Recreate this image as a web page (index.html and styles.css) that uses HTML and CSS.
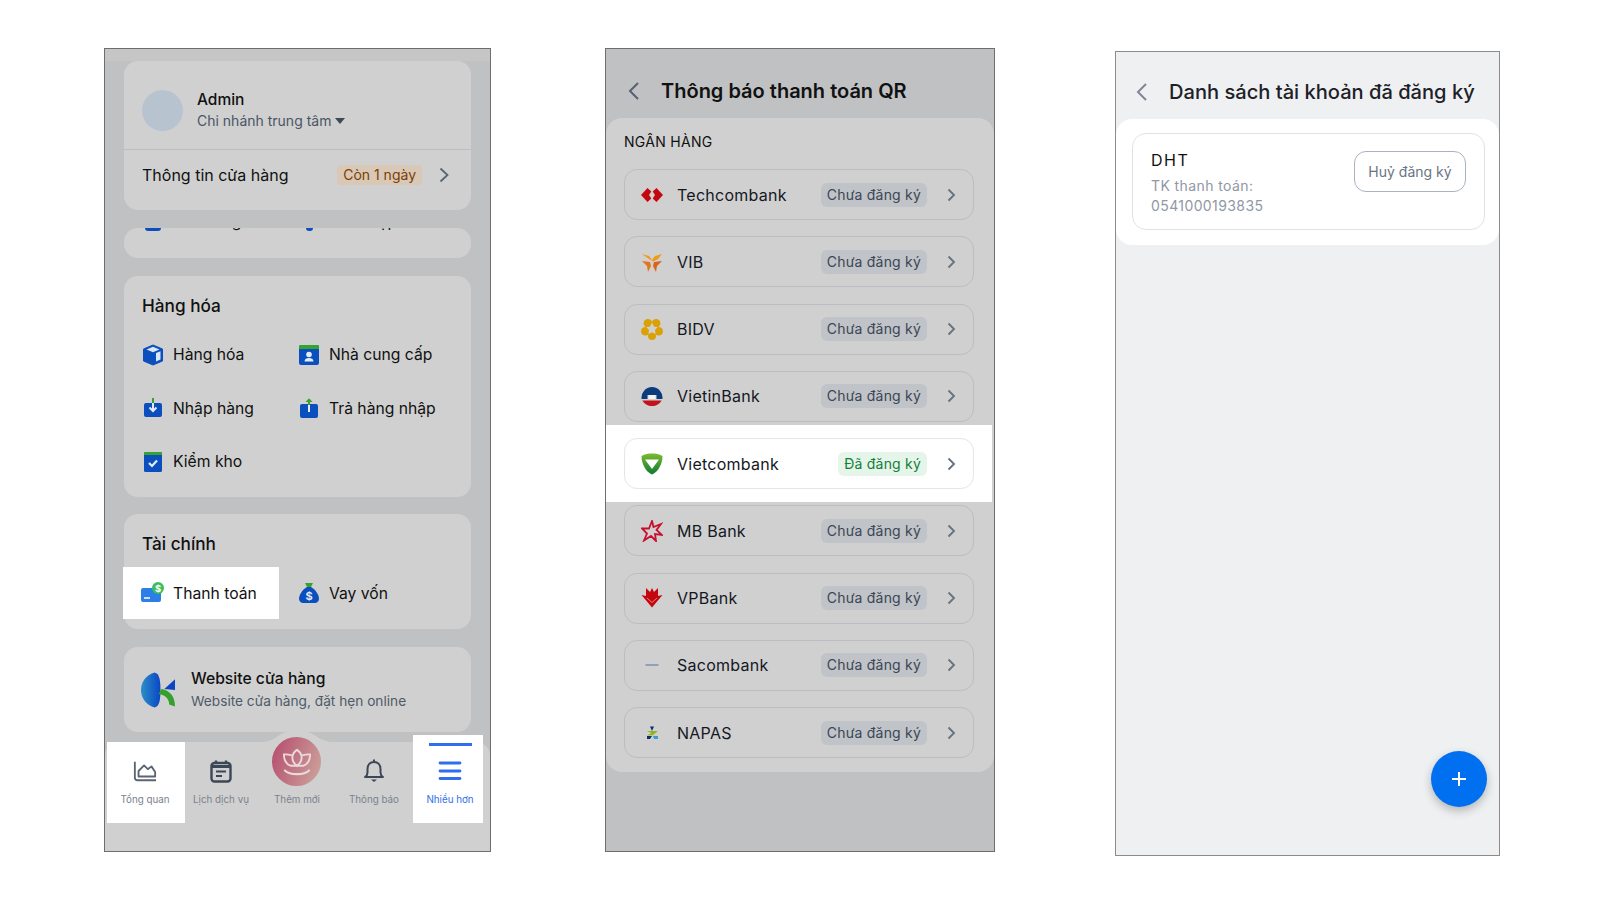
FILE: index.html
```html
<!DOCTYPE html>
<html lang="vi">
<head>
    <meta charset="UTF-8">
    <title>Thông báo thanh toán QR</title>
    <link rel="stylesheet" href="styles.css">
</head>
<body>
    <div class="page">

        <!-- man hinh 1: nhieu hon -->
        <div class="phone phone-menu">
            <div class="strip"></div>
            <div class="card card-store">
                <div class="store-user">
                    <div class="avatar"></div>
                    <div>
                        <div class="user-name">Admin</div>
                        <div class="user-branch">Chi nhánh trung tâm <span class="caret"></span></div>
                    </div>
                </div>
                <div class="store-info">
                    <span class="store-label">Thông tin cửa hàng</span>
                    <span class="days-pill">Còn 1 ngày</span>
                    <svg class="chev-big" viewBox="0 0 10 16"><path d="M1.5 1.5L8.5 8L1.5 14.5"/></svg>
                </div>
            </div>

            <div class="card card-clipped">
                <div class="menu-grid clipped-row">
                    <div class="menu-item"><span class="blue-square"></span>Đơn hàng</div>
                    <div class="menu-item"><span class="blue-dot"></span>Thu nhập</div>
                </div>
            </div>

            <div class="card card-goods">
                <div class="card-title">Hàng hóa</div>
                <div class="menu-grid">
                    <div class="menu-item">
                        <svg class="menu-icon" viewBox="0 0 22 22"><path d="M11 1L20.500 5V17L11 21L1.500 17V5Z" fill="#0b4fbf" stroke="#0b4fbf" stroke-linejoin="round"/><path d="M11 2.800L17.500 5.500L11 8.200L4.500 5.500Z" fill="#d8e6f7"/><path d="M14 9L18.500 7.200V15.500L14 17.400Z" fill="#d8e6f7"/></svg>
                        Hàng hóa
                    </div>
                    <div class="menu-item">
                        <svg class="menu-icon" viewBox="0 0 22 22"><rect x="1" y="1" width="20" height="20" rx="2" fill="#0b4fbf"/><path d="M1 5V3a2 2 0 0 1 2-2h16a2 2 0 0 1 2 2v2Z" fill="#37a22e"/><circle cx="11" cy="10.500" r="2.800" fill="#e3ecf7"/><path d="M6.500 17.500c0-2.500 2-3.500 4.500-3.500s4.500 1 4.500 3.500Z" fill="#e3ecf7"/></svg>
                        Nhà cung cấp
                    </div>
                    <div class="menu-item">
                        <svg class="menu-icon" viewBox="0 0 22 22"><path d="M4 6h14a2 2 0 0 1 2 2v10a2 2 0 0 1-2 2H4a2 2 0 0 1-2-2V8a2 2 0 0 1 2-2Z" fill="#0b4fbf"/><path d="M11 1V6" stroke="#37a22e" stroke-width="2"/><path d="M11 6v7" stroke="#e3ecf7" stroke-width="2"/><path d="M7.500 10.500L11 14L14.500 10.500" fill="none" stroke="#e3ecf7" stroke-width="2"/></svg>
                        Nhập hàng
                    </div>
                    <div class="menu-item">
                        <svg class="menu-icon" viewBox="0 0 22 22"><path d="M4 7h14a2 2 0 0 1 2 2v10a2 2 0 0 1-2 2H4a2 2 0 0 1-2-2V9a2 2 0 0 1 2-2Z" fill="#0b4fbf"/><path d="M11 3v5" stroke="#37a22e" stroke-width="2"/><path d="M7.500 5L11 1.200L14.500 5Z" fill="#37a22e"/><path d="M11 8v7" stroke="#e3ecf7" stroke-width="2"/></svg>
                        Trả hàng nhập
                    </div>
                    <div class="menu-item">
                        <svg class="menu-icon" viewBox="0 0 22 22"><rect x="2" y="1" width="18" height="20" rx="1.500" fill="#0b4fbf"/><path d="M2 4V2.500A1.500 1.500 0 0 1 3.500 1h15A1.500 1.500 0 0 1 20 2.500V4Z" fill="#37a22e"/><path d="M7 12L10 15L15 9.500" fill="none" stroke="#e3ecf7" stroke-width="2.200"/></svg>
                        Kiểm kho
                    </div>
                </div>
            </div>

            <div class="card card-finance">
                <div class="card-title">Tài chính</div>
                <div class="finance-grid">
                    <div class="menu-item finance-on">
                        <svg class="menu-icon pay-icon" viewBox="0 0 24 22"><rect x="0" y="6" width="20" height="14" rx="2" fill="#2d7fe6"/><path d="M3 16h6" stroke="#fff" stroke-width="1.500"/><circle cx="17" cy="6" r="6" fill="#3bbf5a"/><text class="money money-small" x="17" y="9.500" text-anchor="middle">$</text></svg>
                        Thanh toán
                    </div>
                    <div class="menu-item">
                        <svg class="menu-icon" viewBox="0 0 22 22"><path d="M7 1h8l-2 4H9Z" fill="#37a22e"/><path d="M9 5h4c5 3 8 8 8 12 0 2-2 4-4 4H5c-2 0-4-2-4-4 0-4 3-9 8-12Z" fill="#0b4fbf"/><text class="money" x="11" y="18" text-anchor="middle">$</text></svg>
                        Vay vốn
                    </div>
                </div>
            </div>

            <div class="card card-web">
                <svg class="web-logo" viewBox="0 0 36 36">
                    <defs><linearGradient id="webBlue" x1="0" y1="0" x2="1" y2="0"><stop offset="0" stop-color="#2b8fc9"/><stop offset="1" stop-color="#0b46c4"/></linearGradient></defs>
                    <path d="M14 0C4 3 0 11 0 18s4 15 14 18c5-1 6-8 6-18s-1-17-6-18Z" fill="url(#webBlue)"/>
                    <path d="M24 17L35 7v11Z" fill="#0b46c4"/>
                    <path d="M21 17c7 1 14 6 14 18l-6-2c0-6-4-10-11-11Z" fill="#35a02c"/>
                </svg>
                <div>
                    <div class="web-name">Website cửa hàng</div>
                    <div class="web-sub">Website cửa hàng, đặt hẹn online</div>
                </div>
            </div>

            <div class="tabbar">
                <svg class="tab-bump" viewBox="0 0 78 11"><path d="M0 11C10 11 14 9 20 5C26 1 30 0 39 0S52 1 58 5C64 9 68 11 78 11Z"/></svg>
                <div class="tab tab-first">
                    <svg class="tab-icon" viewBox="0 0 26 24"><path d="M2 2V19a3 3 0 0 0 3 3H25M6 18V12L12 6L16 10L20 7L24 13V18Z" fill="none" stroke="#5a6473" stroke-width="2" stroke-linejoin="round"/></svg>
                    <span class="tab-label">Tổng quan</span>
                </div>
                <div class="tab tab-second">
                    <svg class="tab-icon" viewBox="0 0 24 24"><rect x="2.500" y="4" width="19" height="18.500" rx="3" fill="none" stroke="#3b4656" stroke-width="2.400"/><path d="M7 1.500V5M17 1.500V5" stroke="#3b4656" stroke-width="2.400"/><path d="M2 6h20v3H2Z" fill="#3b4656"/><path d="M7 12.500H17M7 17H13" stroke="#3b4656" stroke-width="2"/></svg>
                    <span class="tab-label">Lịch dịch vụ</span>
                </div>
                <div class="tab tab-center">
                    <span class="tab-label">Thêm mới</span>
                </div>
                <div class="tab tab-fourth">
                    <svg class="tab-icon" viewBox="0 0 24 24"><path d="M12 3c-4 0-6.500 3-6.500 7v3.500c0 2-1 3.500-2.500 4.500h18c-1.500-1-2.500-2.500-2.500-4.500V10c0-4-2.500-7-6.500-7Z" fill="none" stroke="#3b4656" stroke-width="2" stroke-linejoin="round"/><path d="M12 .5V3" stroke="#3b4656" stroke-width="2"/><path d="M9 20.500h6L12 23Z" fill="#3b4656"/></svg>
                    <span class="tab-label">Thông báo</span>
                </div>
                <div class="tab tab-more">
                    <div class="tab-mark"></div>
                    <svg class="tab-icon" viewBox="0 0 24 24"><path d="M2 4H22M2 12H22M2 19.500H22" stroke="#2f6fed" stroke-width="2.800" stroke-linecap="round"/></svg>
                    <span class="tab-label label-on">Nhiều hơn</span>
                </div>
                <div class="add-button">
                    <svg class="lotus" viewBox="0 0 32 30"><path d="M16 2c3 2 5 5 5 8.500S19 17 16 19c-3-2-5-5-5-8.500S13 4 16 2Z" fill="none" stroke="#ecd9d9" stroke-width="2"/><path d="M10.500 8C7 7 4.500 6.500 2 7c0 5 2 10 7 12h14c5-2 7-7 7-12-2.500-.5-5 0-8.500 1" fill="none" stroke="#ecd9d9" stroke-width="2"/><path d="M3 24c3 3 7 4 13 4s10-1 13-4" fill="none" stroke="#ecd9d9" stroke-width="2.200" stroke-linecap="round"/></svg>
                </div>
            </div>
        </div>

        <!-- man hinh 2: danh sach ngan hang -->
        <div class="phone phone-banks">
            <div class="top-bar">
                <svg class="back" viewBox="0 0 12 20"><path d="M10 2L2 10L10 18"/></svg>
                <h1 class="bar-title">Thông báo thanh toán QR</h1>
            </div>
            <div class="sheet">
                <div class="sheet-label">NGÂN HÀNG</div>
                <div class="bank-list">
                    <div class="bank-row">
                        <svg class="bank-logo" viewBox="0 0 22 22"><path d="M6.500 4L0 11L6.500 18L10.300 14.500L8 11L10.300 7.500Z" fill="#c4070f"/><path d="M15.500 4L22 11L15.500 18L11.700 14.500L14 11L11.700 7.500Z" fill="#c4070f"/></svg>
                        <span class="bank-name">Techcombank</span>
                        <span class="pill">Chưa đăng ký</span>
                        <svg class="chev"><use href="#chev"/></svg>
                    </div>
                    <div class="bank-row">
                        <svg class="bank-logo" viewBox="0 0 22 22"><path d="M1 3L8 5L11 9L14 5L21 3L17 8L12.500 10.500L8 8Z" fill="#f09a1a"/><path d="M1 10L9 11L10 15L7 21L6 15Z" fill="#e4761b"/><path d="M21 10L13 11L12 15L15 21L16 15Z" fill="#d9641a"/></svg>
                        <span class="bank-name">VIB</span>
                        <span class="pill">Chưa đăng ký</span>
                        <svg class="chev"><use href="#chev"/></svg>
                    </div>
                    <div class="bank-row">
                        <svg class="bank-logo bidv-logo" viewBox="0 0 22 22"><circle cx="15.100" cy="5.300" r="4.300"/><circle cx="17.700" cy="13.200" r="4.300"/><circle cx="11" cy="18" r="4"/><circle cx="4.300" cy="13.200" r="4.300"/><circle cx="6.900" cy="5.300" r="4.300"/><path class="bidv-star" d="M11 4.500L12.900 8.400L16.700 9.300L14 12L14.500 16L11 14.200L7.500 16L8 12L5.300 9.300L9.100 8.400Z"/></svg>
                        <span class="bank-name">BIDV</span>
                        <span class="pill">Chưa đăng ký</span>
                        <svg class="chev"><use href="#chev"/></svg>
                    </div>
                    <div class="bank-row">
                        <svg class="bank-logo" viewBox="0 0 22 22"><path d="M.6 14A10.500 10.500 0 1 1 21.400 14H15.500V10H6.500V14Z" fill="#0b3a7d"/><path d="M7.500 10H14.500V14H7.500Z" fill="#f4f4f4"/><path d="M1.500 15.500H20.500C19 19 15 21 11 21S3 19 1.500 15.500Z" fill="#c3121d"/></svg>
                        <span class="bank-name">VietinBank</span>
                        <span class="pill">Chưa đăng ký</span>
                        <svg class="chev"><use href="#chev"/></svg>
                    </div>
                    <div class="bank-band">
                        <div class="bank-row bank-on">
                            <svg class="bank-logo" viewBox="0 0 22 22">
                                <defs><linearGradient id="vcbGreen" x1="0" y1="0" x2="0" y2="1"><stop offset="0" stop-color="#7dbb2e"/><stop offset="1" stop-color="#0a7a35"/></linearGradient></defs>
                                <path d="M0.500 3C4 1 7 .5 11 .5S18 1 21.500 3C21.500 11 17 19 11 21.500C5 19 .5 11 .5 3Z" fill="url(#vcbGreen)"/>
                                <path d="M4 6.500H18L11 16Z" fill="#fff"/>
                            </svg>
                            <span class="bank-name">Vietcombank</span>
                            <span class="pill pill-on">Đã đăng ký</span>
                            <svg class="chev"><use href="#chev"/></svg>
                        </div>
                    </div>
                    <div class="bank-row">
                        <svg class="bank-logo" viewBox="0 0 22 22"><path d="M11 1L12.500 7L20 4L15.500 10L21 15L14 14L15 21L10 16L3 20.500L6 13.500L1 8.500L8 8.500Z" fill="none" stroke="#c8102e" stroke-width="1.800"/></svg>
                        <span class="bank-name">MB Bank</span>
                        <span class="pill">Chưa đăng ký</span>
                        <svg class="chev"><use href="#chev"/></svg>
                    </div>
                    <div class="bank-row">
                        <svg class="bank-logo" viewBox="0 0 22 22"><path d="M5 1L9 5L11 1L13 5L17 1V9L21.500 8L11 20.500L.5 8L5 9Z" fill="#c4070f"/><path d="M6 11L11 15.500L16 11" fill="none" stroke="#ee9a9a" stroke-width=".8"/></svg>
                        <span class="bank-name">VPBank</span>
                        <span class="pill">Chưa đăng ký</span>
                        <svg class="chev"><use href="#chev"/></svg>
                    </div>
                    <div class="bank-row">
                        <svg class="bank-logo" viewBox="0 0 22 22"><path d="M4.500 11H17.500" stroke="#2a5d94" stroke-width=".8"/></svg>
                        <span class="bank-name">Sacombank</span>
                        <span class="pill">Chưa đăng ký</span>
                        <svg class="chev"><use href="#chev"/></svg>
                    </div>
                    <div class="bank-row">
                        <svg class="bank-logo" viewBox="0 0 22 22"><path d="M9 4.500H13L11 9Z" fill="#0b2d6b"/><path d="M6 9L17 9L12 13L16 13L6 13.500L10.500 11Z" fill="#8fb31a"/><path d="M6 14H11L9 17H6Z" fill="#0b2d6b"/><path d="M12 14H17V17H13Z" fill="#3d9ad6"/></svg>
                        <span class="bank-name">NAPAS</span>
                        <span class="pill">Chưa đăng ký</span>
                        <svg class="chev"><use href="#chev"/></svg>
                    </div>
                </div>
            </div>
        </div>

        <!-- man hinh 3: tai khoan da dang ky -->
        <div class="phone phone-accounts">
            <div class="top-bar top-bar-light">
                <svg class="back back-light" viewBox="0 0 12 20"><path d="M10 2L2 10L10 18"/></svg>
                <h1 class="bar-title bar-title-light">Danh sách tài khoản đã đăng ký</h1>
            </div>
            <div class="sheet sheet-white">
                <div class="account-card">
                    <div>
                        <div class="account-name">DHT</div>
                        <div class="account-sub">TK thanh toán:</div>
                        <div class="account-sub">0541000193835</div>
                    </div>
                    <div class="cancel-btn">Huỷ đăng ký</div>
                </div>
            </div>
            <div class="fab">
                <svg class="fab-plus" viewBox="0 0 14 14"><path d="M7 0V14M0 7H14"/></svg>
            </div>
        </div>
    </div>

    <svg class="sprite"><symbol id="chev" viewBox="0 0 9 14"><path d="M1.500 1.500L7 7L1.500 12.500" fill="none" stroke-width="1.900"/></symbol></svg>
</body>
</html>
```

FILE: styles.css
```css
* {
    box-sizing: border-box;
}

body {
    font-family: 'Inter', 'Liberation Sans', sans-serif;
    background-color: #fff;
    margin: 0;
    padding: 0;
    color: #111;
}

.page {
    display: flex;
    align-items: flex-start;
    padding: 48px 0 0 104px;
    height: 900px;
    overflow: hidden;
}

.sprite {
    display: none;
}

.phone {
    position: relative;
    height: 804px;
    border: 1px solid #6e6e6e;
    background-color: #c0c1c3;
    overflow: hidden;
}

.phone-menu {
    width: 387px;
    display: flex;
    flex-direction: column;
    padding: 0 19px;
}

.phone-banks {
    width: 390px;
    margin-left: 114px;
}

.phone-accounts {
    width: 385px;
    height: 805px;
    margin-left: 120px;
    margin-top: 3px;
    background-color: #eff0f2;
    border-color: #8c8c8c;
}

/* man hinh 1 */
.strip {
    height: 12px;
    margin: 0 -19px;
    background-color: #c6c6c6;
    flex: none;
}

.card {
    background-color: #d0d0d0;
    border-radius: 14px;
    flex: none;
}

.card-store {
    height: 149px;
}

.store-user {
    height: 89px;
    display: flex;
    align-items: center;
    gap: 14px;
    padding: 11px 0 0 18px;
    border-bottom: 1px solid #bcbec1;
}

.avatar {
    width: 41px;
    height: 41px;
    border-radius: 50%;
    background-color: #b8c3d0;
}

.user-name {
    font-size: 15.500px;
    font-weight: 500;
    line-height: 20px;
}

.user-branch {
    font-size: 14px;
    line-height: 22px;
    color: #4a5565;
}

.caret {
    display: inline-block;
    width: 0;
    height: 0;
    margin-bottom: 2px;
    border-left: 5px solid transparent;
    border-right: 5px solid transparent;
    border-top: 6px solid #3e4856;
}

.store-info {
    height: 51px;
    display: flex;
    align-items: center;
    padding: 0 22px 2px 18px;
}

.store-label {
    font-size: 16px;
    flex: 1;
}

.days-pill {
    font-size: 14px;
    line-height: 20px;
    padding: 0 6px;
    background-color: #d9c8b6;
    color: #7a3e05;
    border-radius: 4px;
}

.chev-big {
    width: 10px;
    height: 16px;
    margin-left: 17px;
}

.chev-big path {
    fill: none;
    stroke: #596473;
    stroke-width: 1.800;
}

.card-clipped {
    height: 30px;
    margin-top: 18px;
    overflow: hidden;
    padding-left: 18px;
}

.card-clipped .clipped-row {
    margin-top: -33.500px;
}

.blue-square {
    width: 16px;
    height: 20px;
    margin: 0 9px 0 3px;
    background-color: #0b4fbf;
    border-radius: 3px;
}

.blue-dot {
    width: 7px;
    height: 20px;
    margin: 0 14px 0 8px;
    background-color: #0b4fbf;
    border-radius: 3px;
}

.card-goods {
    height: 221px;
    margin-top: 18px;
    padding: 19px 0 0 18px;
}

.card-title {
    font-size: 17.200px;
    font-weight: 500;
    line-height: 22px;
}

.menu-grid {
    display: grid;
    grid-template-columns: 156px 1fr;
    grid-auto-rows: 53.500px;
    margin-top: 11px;
}

.menu-item {
    display: flex;
    align-items: center;
    font-size: 15.700px;
    white-space: nowrap;
}

.menu-icon {
    width: 22px;
    height: 22px;
    margin-right: 9px;
    flex: none;
}

.money {
    font-family: 'Inter', sans-serif;
    font-size: 11px;
    font-weight: 700;
    fill: #e3ecf7;
}

.money-small {
    font-size: 9.500px;
    fill: #fff;
}

.card-finance {
    height: 115px;
    margin-top: 17px;
    padding: 19px 0 0 18px;
}

.finance-grid {
    display: grid;
    grid-template-columns: 156px 1fr;
    height: 52px;
    margin: 12px 0 0 -19px;
}

.finance-grid .menu-item:last-child {
    padding-left: 19px;
}

.finance-on {
    background-color: #fff;
    padding-left: 18px;
}

.pay-icon {
    width: 24px;
    margin-right: 8px;
}

.card-web {
    height: 85px;
    margin-top: 18px;
    display: flex;
    align-items: center;
    gap: 15px;
    padding-left: 17px;
}

.web-logo {
    width: 35px;
    height: 36px;
    flex: none;
}

.web-name {
    font-size: 15.700px;
    font-weight: 500;
    line-height: 22px;
}

.web-sub {
    font-size: 13.700px;
    line-height: 22px;
    color: #4f5a69;
}

.tabbar {
    position: relative;
    display: flex;
    align-items: flex-start;
    flex: none;
    height: 109px;
    margin: 10px -19px 0;
    padding-left: 2px;
    background-color: #d0d0d0;
    border-radius: 14px 14px 0 0;
}

.tab-bump {
    position: absolute;
    left: 153px;
    top: -11px;
    width: 78px;
    height: 11px;
}

.tab-bump path {
    fill: #d0d0d0;
}

.tab {
    height: 81px;
    display: flex;
    flex-direction: column;
    align-items: center;
    padding-top: 17px;
}

.tab-icon {
    width: 24px;
    height: 24px;
}

.tab-label {
    font-size: 9.800px;
    line-height: 14px;
    margin-top: 10px;
    color: #7a828d;
    white-space: nowrap;
}

.tab-first {
    width: 78px;
    padding-right: 2px;
    background-color: #fff;
}

.tab-second {
    width: 74px;
    padding-right: 2px;
}

.tab-center {
    width: 76px;
    padding-top: 41px;
}

.tab-fourth {
    width: 76px;
    margin-right: 2px;
    padding-left: 2px;
}

.tab-more {
    position: relative;
    width: 70px;
    height: 88px;
    margin-top: -7px;
    padding: 24px 0 0 4px;
    background-color: #fff;
}

.tab-mark {
    position: absolute;
    top: 8px;
    left: 16px;
    width: 43px;
    height: 3px;
    background-color: #2f6fed;
}

.label-on {
    color: #2f6fed;
}

.add-button {
    position: absolute;
    left: 167px;
    top: -5px;
    width: 49px;
    height: 49px;
    border-radius: 50%;
    background: linear-gradient(110deg, #b54a6c, #cda79e);
    display: flex;
    align-items: center;
    justify-content: center;
}

.lotus {
    width: 30px;
    height: 28px;
}

/* man hinh 2 */
.top-bar {
    height: 69px;
    padding: 14px 0 0 22px;
    display: flex;
    align-items: center;
    gap: 21px;
}

.top-bar-light {
    padding: 10px 0 0 20px;
    gap: 21px;
}

.back {
    width: 12px;
    height: 20px;
    flex: none;
}

.back path {
    fill: none;
    stroke: #566170;
    stroke-width: 2;
}

.back-light path {
    stroke: #7e8793;
}

.bar-title {
    margin: 0;
    font-size: 20px;
    font-weight: 600;
}

.bar-title-light {
    font-size: 20.100px;
    font-weight: 500;
    color: #1d2127;
    white-space: nowrap;
}

.sheet {
    height: 654px;
    background-color: #d0d0d0;
    border-radius: 16px;
    padding: 13px 20px 0 18px;
}

.sheet-label {
    font-size: 14px;
    font-weight: 400;
    letter-spacing: .3px;
    line-height: 22px;
}

.bank-list {
    display: flex;
    flex-direction: column;
    gap: 16.250px;
    margin-top: 16px;
}

.bank-row {
    height: 51px;
    display: flex;
    align-items: center;
    padding: 0 17px 0 16px;
    border: 1px solid #bbbdc0;
    border-radius: 13px;
}

.bank-band {
    margin: -13px -18px;
    padding: 13px 18px;
    background-color: #fff;
}

.bank-row.bank-on {
    background-color: #fff;
    border-color: #e4e6e9;
}

.bidv-logo circle {
    fill: #dba004;
}

.bidv-star {
    fill: #d0d0d0;
}

.bank-logo {
    width: 22px;
    height: 22px;
    margin-right: 14px;
    flex: none;
}

.bank-name {
    flex: 1;
    font-size: 16px;
    font-weight: 400;
    letter-spacing: .25px;
    color: #14181f;
}

.pill {
    height: 24px;
    padding: 0 6px;
    font-size: 14px;
    line-height: 24px;
    letter-spacing: .2px;
    color: #3c4654;
    background-color: #c0c3c8;
    border-radius: 6px;
}

.pill-on {
    color: #12803a;
    background-color: #e6f5ea;
}

.chev {
    width: 9px;
    height: 14px;
    margin-left: 20px;
    stroke: #69737f;
    flex: none;
}

/* man hinh 3 */
.sheet-white {
    height: 126px;
    margin-top: -2px;
    background-color: #fff;
    padding: 14px 14px 0 16px;
}

.account-card {
    height: 97px;
    display: flex;
    justify-content: space-between;
    align-items: flex-start;
    padding: 16px 18px 0 18px;
    border: 1px solid #dfe3e8;
    border-radius: 14px;
}

.account-name {
    font-size: 16px;
    font-weight: 400;
    letter-spacing: 1.500px;
    line-height: 20px;
    margin-bottom: 6px;
}

.account-sub {
    font-size: 14px;
    line-height: 20px;
    letter-spacing: .4px;
    color: #8f98a5;
}

.cancel-btn {
    width: 112px;
    height: 41px;
    margin-top: 1px;
    font-size: 14px;
    line-height: 39px;
    text-align: center;
    color: #6b7583;
    border: 1px solid #aab2bf;
    border-radius: 12px;
}

.fab {
    position: absolute;
    right: 12px;
    bottom: 48px;
    width: 56px;
    height: 56px;
    border-radius: 50%;
    background-color: #0070f0;
    box-shadow: 0 4px 10px rgba(0,0,0,0.25);
    display: flex;
    align-items: center;
    justify-content: center;
}

.fab-plus {
    width: 14px;
    height: 14px;
}

.fab-plus path {
    stroke: #fff;
    stroke-width: 2;
}
```
